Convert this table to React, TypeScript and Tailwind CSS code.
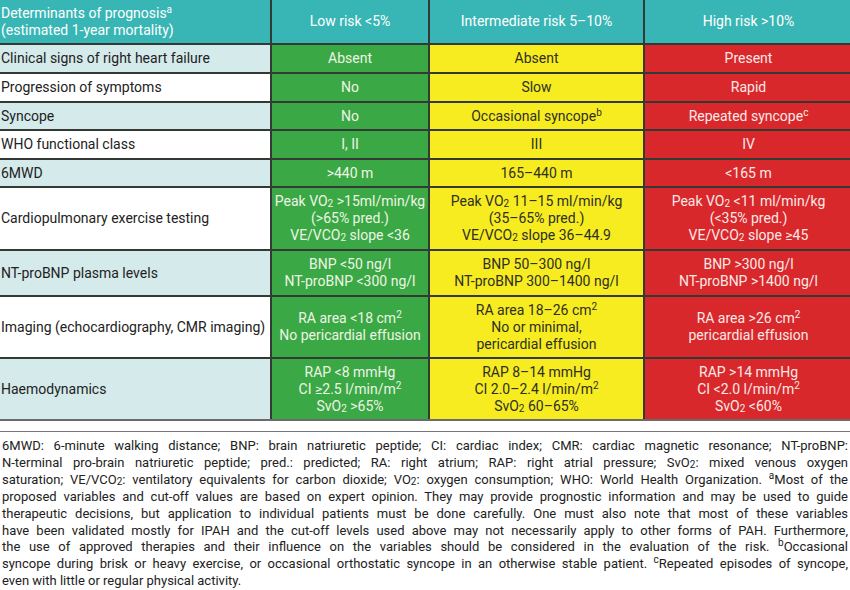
import React from 'react'

type Risk = 'low' | 'mid' | 'high'

const cellTone: Record<Risk, string> = {
  low: 'bg-[#3aa844] text-[#eef5e4]',
  mid: 'bg-[#f6ec20] text-[#2f2f24]',
  high: 'bg-[#d8282c] text-[#fbe9e6]',
}

const Sub = ({ children }: { children: React.ReactNode }) => (
  <sub className="text-[10px] leading-none relative top-[1px] align-baseline">{children}</sub>
)
const Sup = ({ children }: { children: React.ReactNode }) => (
  <sup className="text-[10px] leading-none relative -top-[5px] align-baseline">{children}</sup>
)

const rows: { label: React.ReactNode; shade: boolean; cells: React.ReactNode[] }[] = [
  { label: 'Clinical signs of right heart failure', shade: true, cells: ['Absent', 'Absent', 'Present'] },
  { label: 'Progression of symptoms', shade: false, cells: ['No', 'Slow', 'Rapid'] },
  {
    label: 'Syncope',
    shade: true,
    cells: [
      'No',
      <>Occasional syncope<Sup>b</Sup></>,
      <>Repeated syncope<Sup>c</Sup></>,
    ],
  },
  { label: 'WHO functional class', shade: false, cells: ['I, II', 'III', 'IV'] },
  { label: '6MWD', shade: true, cells: ['>440 m', '165–440 m', '<165 m'] },
  {
    label: 'Cardiopulmonary exercise testing',
    shade: false,
    cells: [
      <>Peak VO<Sub>2</Sub> &gt;15ml/min/kg<br />(&gt;65% pred.)<br />VE/VCO<Sub>2</Sub> slope &lt;36</>,
      <>Peak VO<Sub>2</Sub> 11–15 ml/min/kg<br />(35–65% pred.)<br />VE/VCO<Sub>2</Sub> slope 36–44.9</>,
      <>Peak VO<Sub>2</Sub> &lt;11 ml/min/kg<br />(&lt;35% pred.)<br />VE/VCO<Sub>2</Sub> slope ≥45</>,
    ],
  },
  {
    label: 'NT-proBNP plasma levels',
    shade: true,
    cells: [
      <>BNP &lt;50 ng/l<br />NT-proBNP &lt;300 ng/l</>,
      <>BNP 50–300 ng/l<br />NT-proBNP 300–1400 ng/l</>,
      <>BNP &gt;300 ng/l<br />NT-proBNP &gt;1400 ng/l</>,
    ],
  },
  {
    label: 'Imaging (echocardiography, CMR imaging)',
    shade: false,
    cells: [
      <>RA area &lt;18 cm<Sup>2</Sup><br />No pericardial effusion</>,
      <>RA area 18–26 cm<Sup>2</Sup><br />No or minimal,<br />pericardial effusion</>,
      <>RA area &gt;26 cm<Sup>2</Sup><br />pericardial effusion</>,
    ],
  },
  {
    label: 'Haemodynamics',
    shade: true,
    cells: [
      <>RAP &lt;8 mmHg<br />CI ≥2.5 l/min/m<Sup>2</Sup><br />SvO<Sub>2</Sub> &gt;65%</>,
      <>RAP 8–14 mmHg<br />CI 2.0–2.4 l/min/m<Sup>2</Sup><br />SvO<Sub>2</Sub> 60–65%</>,
      <>RAP &gt;14 mmHg<br />CI &lt;2.0 l/min/m<Sup>2</Sup><br />SvO<Sub>2</Sub> &lt;60%</>,
    ],
  },
]

const risks: Risk[] = ['low', 'mid', 'high']

const notes: React.ReactNode[] = [
  '6MWD: 6-minute walking distance; BNP: brain natriuretic peptide; CI: cardiac index; CMR: cardiac magnetic resonance; NT-proBNP:',
  <>N-terminal pro-brain natriuretic peptide; pred.: predicted; RA: right atrium; RAP: right atrial pressure; SvO<Sub>2</Sub>: mixed venous oxygen</>,
  <>saturation; VE/VCO<Sub>2</Sub>: ventilatory equivalents for carbon dioxide; VO<Sub>2</Sub>: oxygen consumption; WHO: World Health Organization. <Sup>a</Sup>Most of the</>,
  'proposed variables and cut-off values are based on expert opinion. They may provide prognostic information and may be used to guide',
  'therapeutic decisions, but application to individual patients must be done carefully. One must also note that most of these variables',
  'have been validated mostly for IPAH and the cut-off levels used above may not necessarily apply to other forms of PAH. Furthermore,',
  <>the use of approved therapies and their influence on the variables should be considered in the evaluation of the risk. <Sup>b</Sup>Occasional</>,
  <>syncope during brisk or heavy exercise, or occasional orthostatic syncope in an otherwise stable patient. <Sup>c</Sup>Repeated episodes of syncope,</>,
]

export default function App() {
  return (
    <div className="w-[850px] h-[590px] bg-white overflow-hidden font-['Roboto',sans-serif]">
      {/* Таблица */}
      <div className="grid grid-cols-[270px_156px_213px_207px] grid-rows-[43px_27px_27px_26px_27px_26px_61px_44px_60px_60px] gap-[2px] bg-[#333a33] border-b-2 border-[#6b6b6b] text-[14px] leading-[17px]">
        <div className="bg-[#38b6b5] text-white px-[1px] flex flex-col justify-center">
          <div>Determinants of prognosis<Sup>a</Sup></div>
          <div>(estimated 1-year mortality)</div>
        </div>
        <div className="bg-[#38b6b5] text-white flex items-center justify-center">Low risk &lt;5%</div>
        <div className="bg-[#38b6b5] text-white flex items-center justify-center">Intermediate risk 5–10%</div>
        <div className="bg-[#38b6b5] text-white flex items-center justify-center">High risk &gt;10%</div>

        {rows.map((row, i) => (
          <React.Fragment key={i}>
            <div className={`${row.shade ? 'bg-[#d5eaeb]' : 'bg-white'} text-[#222] px-[1px] flex items-center`}>
              {row.label}
            </div>
            {row.cells.map((c, j) => (
              <div key={j} className={`${cellTone[risks[j]]} flex items-center justify-center text-center`}>
                <div>{c}</div>
              </div>
            ))}
          </React.Fragment>
        ))}
      </div>

      {/* Сноски */}
      <div className="mt-[10px] border-t border-[#777] pt-[6px] pl-[2px] pr-[2px] text-[13px] leading-[16.9px] text-[#222]">
        {notes.map((n, i) => (
          <div key={i} className="text-justify [text-align-last:justify] whitespace-nowrap">
            {n}
          </div>
        ))}
        <div>even with little or regular physical activity.</div>
      </div>
    </div>
  )
}
